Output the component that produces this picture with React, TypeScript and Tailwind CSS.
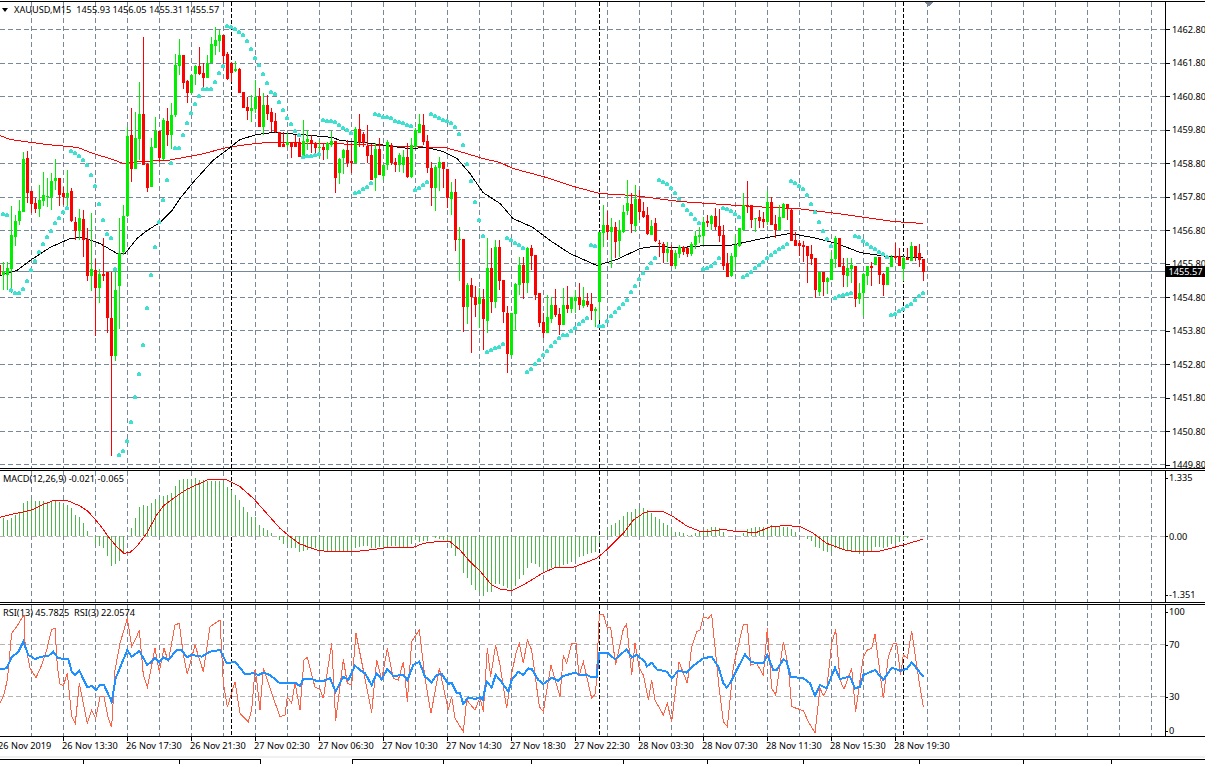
import React from "react";

type Pt = [number, number];

// [green, wickTop, bodyTop, bodyBottom, wickBottom], one per bar, x = 3 + 4k
const CANDLES: number[][] = [
  [1,262,272,275,290],[1,262,268,275,290],[1,206,235,269,293],[1,215,221,237,246],[1,200,211,221,225],[1,152,159,212,212],[0,151,158,193,203],[0,191,191,204,213],
  [0,198,203,209,213],[1,185,200,209,217],[1,172,195,201,206],[1,178,196,197,207],[1,173,181,197,210],[1,159,178,181,190],[0,178,178,195,206],[0,187,193,197,205],
  [1,170,193,197,207],[0,188,191,221,222],[0,217,222,231,240],[1,209,218,231,240],[0,210,219,240,257],[0,228,239,276,281],[1,213,269,276,291],[0,259,270,288,336],
  [1,269,274,288,303],[0,238,274,276,281],[0,272,272,318,333],[0,272,318,356,456],[1,267,290,356,361],[1,218,253,286,329],[1,205,216,252,255],[1,127,136,216,217],
  [0,108,135,169,182],[1,112,138,169,169],[1,82,114,139,160],[0,37,114,165,165],[0,163,164,188,192],[1,138,147,187,187],[1,117,131,148,148],[0,131,131,158,162],
  [1,118,120,159,160],[0,108,121,135,146],[1,103,115,135,149],[1,54,65,115,117],[1,39,55,66,75],[0,55,55,83,89],[0,80,81,93,103],[1,75,75,93,93],
  [1,65,66,74,85],[0,47,66,74,75],[0,63,73,78,90],[1,55,63,78,78],[1,37,44,63,63],[1,27,40,46,55],[1,30,35,41,52],[0,35,35,56,65],
  [0,52,54,79,80],[0,62,63,73,82],[1,61,69,71,72],[0,68,69,93,93],[0,92,92,108,108],[0,97,107,111,120],[1,95,108,111,122],[1,80,97,109,113],
  [0,88,96,127,127],[1,93,105,127,135],[0,95,105,114,120],[0,108,112,122,132],[0,113,121,132,133],[0,132,132,147,147],[0,132,144,147,147],[1,133,142,145,147],
  [0,142,142,147,158],[0,135,142,147,147],[0,138,142,157,157],[1,120,141,158,159],[1,130,139,142,150],[0,135,140,143,153],[0,142,143,148,157],[1,140,147,148,158],
  [0,143,147,150,160],[1,142,143,150,159],[1,131,141,145,147],[0,141,141,178,193],[1,158,159,173,184],[1,149,150,158,174],[0,140,150,163,167],[0,143,161,163,173],
  [1,127,129,163,163],[0,114,129,143,147],[0,132,134,143,147],[0,125,146,156,163],[0,144,155,180,180],[1,143,149,178,191],[0,138,149,175,175],[1,165,165,176,180],
  [1,140,142,165,170],[0,143,145,163,165],[0,158,162,165,172],[1,153,155,165,172],[1,150,157,165,173],[0,143,157,177,178],[1,138,145,177,178],[1,128,130,147,147],
  [1,114,124,133,133],[0,114,125,142,145],[0,135,141,168,173],[0,162,168,188,206],[1,165,167,188,211],[1,157,162,168,191],[0,162,162,169,188],[0,169,169,198,208],
  [1,182,192,199,215],[0,179,192,240,251],[1,227,239,240,281],[0,239,239,307,332],[1,283,285,307,324],[0,278,285,297,353],[0,286,297,305,317],[1,288,297,304,328],
  [0,289,299,319,350],[1,238,268,321,333],[0,248,268,302,313],[1,240,247,302,308],[0,240,247,281,290],[0,280,280,312,323],[0,306,313,354,373],[1,313,313,355,357],
  [1,283,284,314,330],[1,257,265,285,295],[0,257,265,283,299],[1,247,248,283,293],[0,245,248,256,270],[0,255,255,295,300],[0,293,293,323,327],[0,313,322,333,338],
  [1,295,317,333,333],[1,297,305,319,323],[0,289,305,315,317],[0,308,314,325,335],[1,288,305,325,325],[0,286,305,309,313],[1,297,297,309,313],[1,290,297,301,313],
  [0,283,297,305,310],[1,287,300,306,308],[0,293,301,305,307],[0,293,304,311,320],[1,307,309,311,327],[1,232,232,302,320],[1,205,225,233,247],[0,211,225,232,240],
  [1,218,227,232,268],[0,222,227,242,258],[1,220,230,241,257],[1,205,212,232,233],[1,180,203,211,215],[0,193,204,224,233],[1,185,199,226,232],[0,190,199,212,220],
  [0,202,211,217,218],[0,207,215,234,235],[1,220,226,235,235],[0,218,223,241,242],[0,240,243,244,257],[0,242,244,253,263],[1,242,249,253,262],[0,245,250,266,265],
  [1,250,253,266,269],[1,245,247,254,258],[0,246,247,252,255],[0,247,248,254,257],[1,242,244,254,256],[1,231,236,245,249],[1,227,235,237,243],[1,217,222,236,245],
  [0,215,221,223,227],[1,215,216,224,230],[0,208,216,227,230],[0,209,226,236,242],[0,225,235,266,270],[0,253,263,277,277],[1,253,256,276,277],[1,235,245,257,267],
  [1,228,228,246,247],[1,193,205,230,231],[0,181,205,207,213],[0,205,205,220,228],[1,218,218,219,232],[0,210,217,221,228],[0,212,219,222,228],[1,191,202,222,225],
  [0,197,202,225,225],[0,215,224,230,238],[1,205,217,230,230],[1,203,204,218,218],[0,204,204,209,220],[0,209,210,241,241],[0,232,240,246,246],[0,240,243,246,256],
  [0,241,245,247,262],[0,246,246,256,283],[0,245,254,259,265],[0,258,258,290,298],[1,272,272,292,296],[0,272,272,282,296],[1,277,278,282,294],[1,252,259,280,280],
  [1,236,238,259,268],[0,238,238,267,267],[0,258,266,275,287],[1,258,268,276,287],[1,258,265,269,283],[0,266,266,299,307],[1,283,293,299,304],[1,273,274,293,316],
  [1,266,266,276,285],[0,262,266,268,286],[1,257,257,265,265],[0,257,257,275,284],[0,273,274,285,296],[1,267,267,285,285],[1,255,257,267,267],[0,243,256,258,260],
  [0,248,256,266,266],[1,256,258,269,281],[0,248,258,260,260],[1,242,246,261,261],[0,246,246,257,261],[0,244,253,260,267],[0,259,259,272,281],
];

// Parabolic SAR dot y per bar
const SAR = [
  214,215,290,293,293,289,281,270,261,252,244,237,231,223,218,212,208,151,153,156,160,165,175,186,204,220,234,238,269,455,451,441,422,397,374,345,308,275,247,222,
  200,180,163,148,148,135,123,113,104,96,89,89,89,82,73,66,26,27,29,32,35,41,49,58,65,74,83,92,94,102,110,118,124,131,135,157,156,156,155,154,
  120,121,121,122,125,128,130,133,193,192,189,187,183,114,115,117,117,118,121,122,123,125,126,190,188,185,182,114,116,118,120,121,123,127,134,145,164,181,202,220,
  236,352,350,348,347,344,238,240,243,245,248,372,369,364,360,355,351,346,342,338,335,335,331,328,324,321,318,245,246,326,326,321,316,312,308,304,300,292,286,279,
  273,268,263,258,180,182,184,188,193,199,205,210,214,219,223,269,268,266,263,258,208,209,211,214,217,277,275,272,268,265,262,258,255,252,249,247,244,181,183,186,
  189,195,204,212,222,231,239,246,298,296,295,294,293,236,237,241,244,247,249,252,254,257,315,314,311,309,306,304,300,296,293,
];

const SLOW_MA: Pt[] = [[0,135],[10,139],[32,142],[47,144],[78,147],[93,153],[113,159],[123,163],[140,161],[167,160],[200,154],[227,147],[247,144],[267,142],[333,143],[400,146],[445,147],[463,152],[483,158],[500,162],[513,168],[543,176],[577,187],[600,193],[633,195],[680,201],[723,204],[770,207],[797,208],[837,213],[893,221],[923,223]];
const FAST_MA: Pt[] = [[0,275],[17,270],[30,260],[50,247],[70,238],[83,237],[100,243],[117,253],[125,253],[137,238],[147,230],[160,222],[172,210],[180,198],[193,182],[213,160],[230,147],[240,139],[257,134],[273,132],[300,134],[333,137],[340,140],[373,143],[400,147],[410,148],[427,147],[443,151],[457,158],[470,173],[483,192],[500,203],[513,218],[533,227],[550,240],[570,253],[597,265],[617,259],[640,248],[653,246],[680,247],[707,245],[730,245],[767,237],[790,233],[813,237],[837,243],[860,252],[887,256],[923,257]];

// MACD bar tops and lines, traced from a 3x crop (y = 465 + v / 3)
const MACD = [
  160,165,160,150,140,115,107,103,108,108,108,110,108,108,110,118,120,130,150,157,175,197,214,237,243,250,273,302,298,288,265,214,190,158,125,120,122,115,103,100,
  93,90,85,63,45,43,43,43,40,45,45,48,48,48,48,50,65,75,90,105,125,140,155,155,180,190,195,205,214,225,238,240,248,250,260,257,255,252,250,258,
  258,258,258,258,260,258,258,262,248,245,243,243,248,250,245,248,245,243,243,245,245,245,238,225,230,228,228,212,218,222,225,230,250,272,255,325,340,360,375,380,
  392,382,380,358,358,362,370,378,362,342,330,310,295,298,305,315,315,310,308,305,300,298,292,282,275,272,268,265,262,235,214,192,180,175,165,152,140,140,132,128,
  128,135,145,155,162,175,180,193,200,202,205,210,210,205,198,195,192,186,187,188,202,214,214,214,214,205,192,190,187,187,187,187,180,187,187,187,185,192,202,214,
  214,222,228,245,250,258,262,262,250,250,252,255,258,262,267,262,258,258,245,245,248,245,238,235,232,225,220,214,
];
const SIGNAL: Pt[] = [[0,157],[35,148],[60,143],[100,133],[130,118],[160,107],[205,108],[240,123],[265,140],[300,180],[325,215],[350,245],[372,265],[390,262],[410,245],[440,205],[470,150],[490,123],[520,100],[560,73],[600,55],[625,43],[680,45],[720,65],[760,100],[800,145],[840,190],[870,215],[900,237],[950,255],[980,259],[1050,261],[1100,256],[1160,248],[1240,247],[1270,235],[1310,230],[1350,230],[1380,255],[1410,290],[1440,318],[1475,360],[1500,372],[1535,377],[1570,360],[1630,323],[1665,308],[1720,307],[1790,280],[1825,250],[1870,205],[1900,165],[1930,145],[1950,138],[1985,138],[2020,155],[2060,183],[2100,199],[2135,198],[2170,193],[2210,200],[2270,202],[2315,184],[2365,182],[2400,185],[2440,205],[2480,235],[2540,257],[2580,260],[2640,258],[2710,240],[2770,222]];

// RSI lines, same 3x trace (y = 600 + v / 3)
const RSI_SLOW: Pt[] = [[0,207],[20,205],[35,172],[55,155],[70,125],[85,165],[105,177],[125,170],[145,168],[160,155],[175,175],[205,177],[215,215],[225,225],[238,212],[262,262],[275,258],[288,270],[300,255],[312,255],[335,305],[347,235],[382,150],[395,170],[418,153],[442,195],[465,175],[478,187],[490,172],[505,180],[530,150],[545,150],[560,172],[575,165],[605,170],[630,155],[660,150],[680,190],[705,185],[735,222],[760,220],[775,225],[790,218],[810,225],[840,250],[885,248],[900,258],[910,237],[935,237],[950,243],[970,243],[990,235],[1007,275],[1030,230],[1045,240],[1065,197],[1080,210],[1095,220],[1115,255],[1130,220],[1145,238],[1162,207],[1180,228],[1210,225],[1222,240],[1240,195],[1258,185],[1275,230],[1295,247],[1310,225],[1325,222],[1345,252],[1355,248],[1370,278],[1380,280],[1390,312],[1405,292],[1425,297],[1440,292],[1448,300],[1460,245],[1475,262],[1487,225],[1500,240],[1525,275],[1535,240],[1555,215],[1570,225],[1585,205],[1595,207],[1615,240],[1630,252],[1655,233],[1675,243],[1690,228],[1725,218],[1740,225],[1760,225],[1775,232],[1790,230],[1798,158],[1825,160],[1845,178],[1880,148],[1895,172],[1910,165],[1935,185],[1940,200],[1955,188],[1970,208],[2000,215],[2015,235],[2035,212],[2060,218],[2080,197],[2110,175],[2135,170],[2155,200],[2170,250],[2180,262],[2190,250],[2210,210],[2235,163],[2255,187],[2290,190],[2302,165],[2320,210],[2330,210],[2350,178],[2360,185],[2372,230],[2410,235],[2430,250],[2445,288],[2460,255],[2480,265],[2505,203],[2520,237],[2550,230],[2565,265],[2580,260],[2590,225],[2625,210],[2650,240],[2675,203],[2700,212],[2720,207],[2735,187],[2770,230]];
const RSI_FAST: Pt[] = [[0,310],[10,290],[22,240],[35,100],[50,80],[62,60],[72,45],[75,125],[90,205],[108,233],[125,195],[140,150],[155,88],[165,85],[172,200],[180,252],[190,257],[202,220],[215,350],[226,370],[238,250],[262,370],[275,330],[287,355],[300,290],[312,290],[325,355],[335,382],[345,210],[360,130],[382,55],[395,140],[412,105],[418,90],[430,225],[442,262],[465,145],[478,215],[492,145],[505,185],[525,75],[538,70],[550,165],[562,222],[585,135],[610,215],[630,80],[660,60],[670,250],[682,322],[705,245],[720,340],[745,365],[755,330],[765,210],[770,240],[780,330],[790,205],[815,280],[840,350],[855,345],[862,290],[875,310],[885,248],[900,330],[912,180],[922,172],[945,262],[960,268],[970,295],[995,130],[1007,362],[1030,178],[1042,250],[1055,255],[1068,100],[1090,210],[1115,338],[1130,180],[1145,240],[1162,145],[1180,235],[1195,240],[1210,185],[1222,305],[1235,125],[1258,90],[1275,235],[1293,340],[1318,205],[1345,330],[1355,290],[1365,355],[1390,395],[1400,300],[1425,330],[1440,292],[1450,335],[1462,145],[1472,230],[1487,135],[1500,195],[1520,325],[1535,220],[1548,160],[1558,130],[1570,190],[1582,120],[1595,150],[1618,320],[1630,335],[1653,195],[1680,290],[1690,165],[1700,190],[1715,130],[1728,130],[1737,228],[1750,185],[1775,295],[1787,280],[1798,42],[1810,42],[1822,85],[1832,82],[1847,195],[1870,87],[1880,72],[1895,225],[1905,130],[1918,205],[1930,225],[1945,300],[1955,240],[1965,300],[1990,345],[2002,310],[2015,365],[2037,185],[2062,250],[2075,140],[2090,95],[2100,90],[2110,50],[2125,55],[2135,43],[2158,270],[2170,365],[2182,380],[2200,200],[2230,73],[2242,73],[2252,195],[2270,190],[2290,225],[2302,85],[2315,265],[2327,285],[2350,125],[2365,200],[2375,320],[2410,332],[2425,365],[2445,398],[2460,265],[2470,287],[2480,270],[2495,130],[2507,88],[2520,240],[2532,268],[2555,205],[2567,335],[2590,170],[2602,150],[2615,145],[2625,103],[2650,295],[2665,170],[2680,130],[2690,130],[2702,225],[2710,165],[2722,175],[2735,92],[2755,230],[2770,320]];

const GRID_X = Array.from({ length: 37 }, (_, i) => 31 + 32 * i);
const GRID_Y = [29, 63, 96, 130, 163, 197, 230, 263, 297, 330, 364, 397, 431, 464];
const SEPARATORS = [231, 599, 903];
const PRICES = ["1462.80", "1461.80", "1460.80", "1459.80", "1458.80", "1457.80", "1456.80", "1455.80", "1454.80", "1453.80", "1452.80", "1451.80", "1450.80", "1449.80"];
const TIMES = ["26 Nov 2019", "26 Nov 13:30", "26 Nov 17:30", "26 Nov 21:30", "27 Nov 02:30", "27 Nov 06:30", "27 Nov 10:30", "27 Nov 14:30", "27 Nov 18:30", "27 Nov 22:30", "28 Nov 03:30", "28 Nov 07:30", "28 Nov 11:30", "28 Nov 15:30", "28 Nov 19:30"];

const traced = (pts: Pt[], y0: number) => pts.map(([x, y]) => `${x / 3},${y0 + y / 3}`).join(" ");
const plain = (pts: Pt[]) => pts.map(([x, y]) => `${x},${y + 0.5}`).join(" ");

function Grid({ top, bottom }: { top: number; bottom: number }) {
  return (
    <>
      {GRID_X.map((x) => (
        <line key={x} x1={x + 0.5} x2={x + 0.5} y1={top} y2={bottom} stroke="#778899" strokeDasharray="5 3" />
      ))}
      {SEPARATORS.map((x) => (
        <line key={x} x1={x + 0.5} x2={x + 0.5} y1={top} y2={bottom} stroke="#000" strokeDasharray="4 2" />
      ))}
    </>
  );
}

function Level({ y }: { y: number }) {
  return <line x1={0} x2={1165} y1={y + 0.5} y2={y + 0.5} stroke="#b4b4b4" strokeDasharray="5 3" />;
}

function PricePane() {
  return (
    <svg className="block w-[1165px] h-[466px]" viewBox="0 2 1165 466" shapeRendering="crispEdges">
      {GRID_Y.map((y) => (
        <line key={y} x1={0} x2={1165} y1={y + 0.5} y2={y + 0.5} stroke="#778899" strokeDasharray="5 3" />
      ))}
      <Grid top={2} bottom={468} />
      <line x1={0} x2={1165} y1={271.5} y2={271.5} stroke="#778899" />
      <polygon points="924.5,2 933.5,2 929,7" fill="#778899" />
      <polyline points={plain(SLOW_MA)} fill="none" stroke="#ff0000" />
      <polyline points={plain(FAST_MA)} fill="none" stroke="#000" />
      {CANDLES.map(([green, wt, bt, bb, wb], k) => {
        const x = 3 + 4 * k;
        const fill = green ? "#00ee00" : "#ff0000";
        return (
          <g key={k} fill={fill}>
            <rect x={x} y={wt} width={1} height={Math.max(wb - wt, 1)} />
            <rect x={x - 1} y={bt} width={3} height={Math.max(bb - bt, 1)} />
          </g>
        );
      })}
      <rect x={-1} y={265} width={2} height={10} fill="#ff0000" />
      {SAR.map((y, k) => {
        const x = 3 + 4 * k;
        return (
          <g key={k} fill="#40e0d0">
            <rect x={x - 2} y={y - 1} width={4} height={3} />
            <rect x={x - 1} y={y - 2} width={2} height={1} />
          </g>
        );
      })}
    </svg>
  );
}

function MacdPane() {
  return (
    <svg className="block w-[1165px] h-[131px]" viewBox="0 471 1165 131" shapeRendering="crispEdges">
      <Grid top={471} bottom={602} />
      <Level y={536} />
      {MACD.map((v, k) => {
        const x = 3 + 4 * k;
        const y = 465 + v / 3;
        return <rect key={k} x={x} y={Math.min(y, 536)} width={1} height={Math.abs(y - 536)} fill="#4cb84c" />;
      })}
      <polyline points={traced(SIGNAL, 465)} fill="none" stroke="#ff0000" />
    </svg>
  );
}

function RsiPane() {
  return (
    <svg className="block w-[1165px] h-[131px]" viewBox="0 605 1165 131" shapeRendering="crispEdges">
      <Grid top={605} bottom={736} />
      <Level y={644} />
      <Level y={696} />
      <polyline points={traced(RSI_FAST, 600)} fill="none" stroke="#ff6347" />
      <polyline points={traced(RSI_SLOW, 600)} fill="none" stroke="#1e90ff" strokeWidth={2} />
    </svg>
  );
}

function AxisLabel({ children }: { children: React.ReactNode }) {
  return (
    <div className="flex h-[12px] items-center leading-[12px]">
      <span className="w-[2px] h-px bg-black mr-px" />
      {children}
    </div>
  );
}

export default function App() {
  return (
    <div className="relative w-[1205px] h-[764px] overflow-hidden bg-white pt-px text-[9.2px] text-black font-['Noto_Sans',sans-serif]">
      {/* price pane */}
      <div className="relative flex h-[468px] border-t border-b border-black">
        <div className="w-[1165px] shrink-0 border-r border-black box-content">
          <PricePane />
        </div>
        <div className="pt-[11px]">
          {PRICES.map((p) => (
            <div key={p} className="flex h-[33.5px] shrink-0 items-center">
              <span className="w-[4px] h-px bg-black mr-[2px]" />
              {p}
            </div>
          ))}
        </div>
        <div className="absolute left-[1166px] top-[264px] flex h-[11px] w-[39px] items-center justify-center bg-black text-white">
          1455.57
        </div>
        <div className="absolute left-[2px] top-[2px] flex h-[12px] items-center">
          <span className="mr-[6px] h-0 w-0 border-x-[3.5px] border-t-[4px] border-x-transparent border-t-black" />
          <span className="whitespace-pre">XAUUSD,M15  1455.93 1456.05 1455.31 1455.57</span>
        </div>
      </div>

      {/* macd pane */}
      <div className="relative mt-px flex h-[133px] border-t border-b border-black">
        <div className="w-[1165px] shrink-0 border-r border-black box-content">
          <MacdPane />
        </div>
        <div className="flex flex-col justify-between py-px">
          <AxisLabel>1.335</AxisLabel>
          <AxisLabel>0.00</AxisLabel>
          <AxisLabel>-1.351</AxisLabel>
        </div>
        <div className="absolute left-[3px] top-[2px] leading-[12px]">MACD(12,26,9) -0.021 -0.065</div>
      </div>

      {/* rsi pane */}
      <div className="relative mt-px flex h-[133px] border-t border-b border-black">
        <div className="w-[1165px] shrink-0 border-r border-black box-content">
          <RsiPane />
        </div>
        <div className="pt-px">
          <AxisLabel>100</AxisLabel>
          <div className="mt-[21px]"><AxisLabel>70</AxisLabel></div>
          <div className="mt-[40px]"><AxisLabel>30</AxisLabel></div>
          <div className="mt-[22px]"><AxisLabel>0</AxisLabel></div>
        </div>
        <div className="absolute left-[3px] top-[2px] whitespace-pre leading-[12px]">RSI(13) 45.7825  RSI(3) 22.0574</div>
      </div>

      {/* time axis: a tick over each label */}
      <div className="flex h-[19px] w-[1165px] -ml-[2px]">
        {TIMES.map((t, i) => (
          <div key={t} className={i === 0 ? "w-[65px] shrink-0" : "w-[64px] shrink-0"}>
            <div className={i === 0 ? "h-[4px] w-px" : "h-[4px] w-px bg-black"} />
            <div className={i === 0 ? "-mt-px whitespace-nowrap leading-[12px]" : "-ml-px -mt-px whitespace-nowrap leading-[12px]"}>{t}</div>
          </div>
        ))}
      </div>

      {/* tab strip */}
      <div className="h-[2px] bg-[#f0f0f0]" />
      <div className="mt-px flex h-[5px]">
        <div className="h-full w-[84px] border-t border-r border-black" />
        <div className="h-full w-[96px] border-t border-r border-black" />
        <div className="h-full w-[81px] border-t border-r border-black" />
        <div className="h-full w-[91px]" />
        <div className="h-full w-[92px] border-t border-l border-r border-black" />
        <div className="h-full w-[88px] border-t border-r border-black" />
        <div className="h-full w-[92px] border-t border-r border-black" />
        <div className="h-full w-[84px] border-t border-r border-black" />
        <div className="h-full w-[96px] border-t border-r border-black" />
        <div className="h-full w-[116px] border-t border-r border-black" />
        <div className="h-full w-[104px] border-t border-r border-black" />
        <div className="h-full w-[88px] border-t border-r border-black" />
        <div className="h-full flex-1 border-t border-black" />
      </div>
    </div>
  );
}
